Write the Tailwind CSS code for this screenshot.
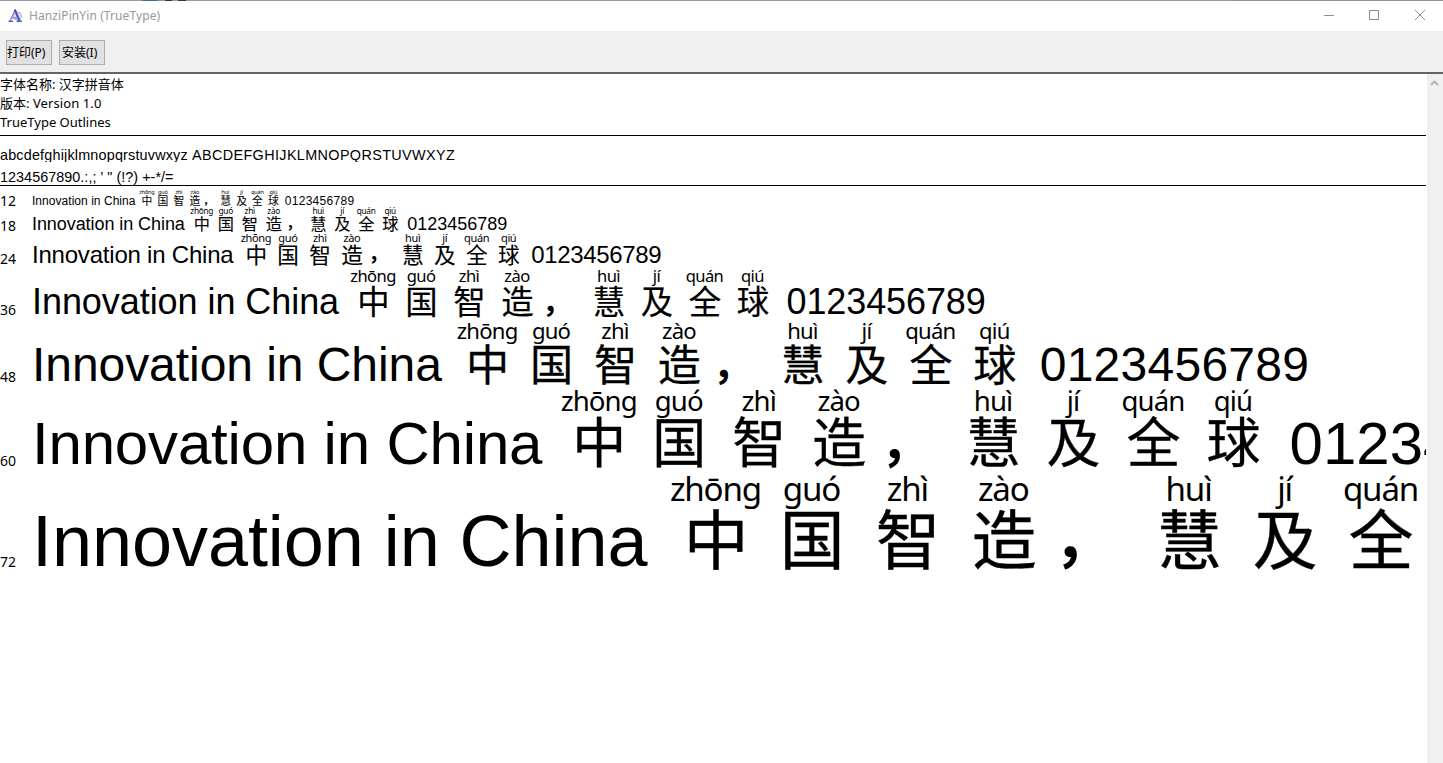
<!DOCTYPE html>
<html lang="zh-CN">
<head>
<meta charset="utf-8">
<title>HanziPinYin (TrueType)</title>
<script src="https://cdn.jsdelivr.net/npm/@tailwindcss/browser@4"></script>
</head>
<body class="bg-white text-black">
<div class="w-[1443px] h-[763px] flex flex-col overflow-hidden font-['Noto_Sans','Noto_Sans_CJK_SC',sans-serif]">
  <div class="h-px shrink-0 bg-[#9a9a9a] flex">
    <i class="ml-[142px] w-4 bg-[#3a6f9c]"></i><i class="ml-[7px] w-[7px] bg-[#333]"></i><i class="ml-[6px] w-[8px] bg-[#333]"></i><i class="ml-auto w-[210px] bg-[#8f8da0]"></i>
  </div>
  <header class="h-[30px] shrink-0 flex items-center">
    <svg class="ml-2 w-4 h-4 shrink-0" viewBox="0 0 16 16" fill="none"><circle cx="9.500" cy="8" r="4" fill="#dfe3f7" stroke="#a3acdf"/><path d="M2 13 7 2" stroke="#8084cc" stroke-width="1.200"/><path d="M6.800 1.500 11.500 13" stroke="#4a4fae" stroke-width="2"/><path d="M3.500 10H10" stroke="#6b70c2"/><path d="M0.500 13.200H5M8.500 13.200H14" stroke="#5a5eb8" stroke-width="1.400"/></svg>
    <span class="ml-[5px] text-[12px] leading-4 text-[#999] whitespace-nowrap tracking-[0.1px]">HanziPinYin (TrueType)</span>
    <div class="ml-auto flex w-[137px] shrink-0 items-center">
      <svg class="w-[46px] h-[30px]" viewBox="0 0 46 30"><path d="M18 14.500H28" stroke="#8c8c8c"/></svg>
      <svg class="w-[46px] h-[30px]" viewBox="0 0 46 30" fill="none"><path d="M17.500 9.500H26.500V18.500H17.500Z" stroke="#8c8c8c"/></svg>
      <svg class="w-[45px] h-[30px]" viewBox="0 0 45 30"><path d="M17 9 27 19M27 9 17 19" stroke="#8c8c8c"/></svg>
    </div>
  </header>
  <nav class="h-[43px] shrink-0 bg-[#efefef] border-b-2 border-[#646464] flex gap-[7px] pl-[6px] pt-[9px] text-[12px]">
    <button class="w-[46px] h-[25px] bg-[#e1e1e1] border border-[#adadad] text-left whitespace-nowrap">打印(P)</button>
    <button class="w-[46px] h-[25px] bg-[#e1e1e1] border border-[#adadad] text-left pl-[2px] whitespace-nowrap">安装(I)</button>
  </nav>
  <div class="flex flex-1 min-h-0">
    <main class="w-[1426px] shrink-0 overflow-hidden whitespace-nowrap">
      <section class="h-[62px] border-b border-black pt-[1px] text-[13px] leading-[19px]">
        <p>字体名称: 汉字拼音体</p>
        <p>版本: <span class="tracking-[0.1px]">Version 1.0</span></p>
        <p>TrueType Outlines</p>
      </section>
      <section class="h-[50px] border-b border-black pt-[10px] font-['Liberation_Sans',sans-serif] text-[14.4px]">
        <p class="h-[16px] leading-[18px] overflow-hidden"><span class="tracking-[0.18px]">abcdefghijklmnopqrstuvwxyz </span><span class="tracking-[0.37px]">ABCDEFGHIJKLMNOPQRSTUVWXYZ</span></p>
        <p class="mt-[6px] leading-[18px] tracking-[0.03px]">1234567890.:,; ' " (!?) +-*/=</p>
      </section>
      <section id="samples"></section>
    </main>
    <aside class="flex-1 ml-px bg-[#f0f0f0]"><svg class="w-4 h-4 mt-[1px]" viewBox="0 0 16 16" fill="none"><path d="M4 10 7.500 6.500 11 10" stroke="#b5b5b5" stroke-width="2"/></svg></aside>
  </div>
</div>
<template id="row">
  <div class="flex items-end">
    <span class="label w-8 shrink-0 text-[14px] leading-none"></span>
    <div class="sample flex items-end shrink-0 leading-none whitespace-pre font-['Liberation_Sans',sans-serif]"></div>
  </div>
</template>
<script>
// size, row height, label padding, latin tracking, comma width (em), digit tracking
const rows = [
  [12, 21, -1, 0.04, 1.22, 0.3],
  [18, 26, 0, -0.07, 1.14, 0],
  [24, 34, 1, -0.21, 1.2, -0.34],
  [36, 53, 3, -0.06, 1.21, -0.1],
  [48, 69, 5, -0.06, 1.24, 0.25],
  [60, 85, 6.5, -0.18, 1.24, 0],
  [72, 103, 8.5, -0.05, 1.24, 0]
];
const glyphs = [['中','zhōng'],['国','guó'],['智','zhì'],['造','zào'],['，',''],['慧','huì'],['及','jí'],['全','quán'],['球','qiú']];
for (const [size, height, pad, track, comma, digitTrack] of rows) {
  const cells = glyphs.map(([h, p]) => p
    ? `<span class="w-[1.333em] flex flex-col items-center shrink-0"><span class="font-['Noto_Sans',sans-serif]"><span class="block text-[0.46em] tracking-[-0.035em] leading-none mb-[-0.03em]">${p}</span></span><span class="block ml-[0.02em] mb-[0.11em] font-['Noto_Sans_CJK_SC',sans-serif]"><span class="block text-[0.9em] leading-none [-webkit-text-stroke:0.006em_black]">${h}</span></span></span>`
    : `<span class="shrink-0 pl-[0.03em] mb-[0.15em] font-['Noto_Sans_CJK_SC',sans-serif]" style="width:${comma}em"><span class="block text-[0.83em] leading-none font-bold">${h}</span></span>`).join('');
  const node = document.getElementById('row').content.cloneNode(true);
  const row = node.firstElementChild;
  row.style.height = height + 'px';
  const label = row.querySelector('.label');
  label.textContent = size;
  label.style.marginBottom = pad + 'px';
  const s = row.querySelector('.sample');
  s.style.fontSize = size + 'px';
  s.innerHTML = `<span style="letter-spacing:${track}px">Innovation in China </span>${cells}<span> </span><span style="letter-spacing:${digitTrack}px">0123456789</span>`;
  document.getElementById('samples').append(row);
}
</script>
</body>
</html>
